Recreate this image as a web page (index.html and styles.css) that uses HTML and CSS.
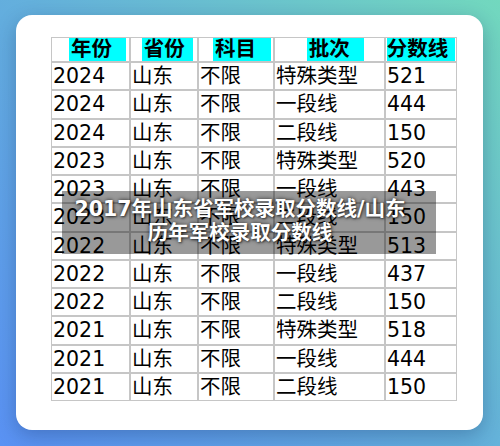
FILE: index.html
```html
<!DOCTYPE html>
<html lang="zh-CN">
<head>
<meta charset="utf-8">
<title>2017年山东省军校录取分数线</title>
<link rel="stylesheet" href="styles.css">
</head>
<body>
<div class="page">
  <div class="card">
    <table class="scores">
      <colgroup>
        <col class="c1"><col class="c2"><col class="c3"><col class="c4"><col class="c5">
      </colgroup>
      <thead>
        <tr>
          <th><span class="hl h1">年份</span></th>
          <th><span class="hl h2">省份</span></th>
          <th><span class="hl h3">科目</span></th>
          <th><span class="hl h4">批次</span></th>
          <th><span class="hl h5">分数线</span></th>
        </tr>
      </thead>
      <tbody>
        <tr><td>2024</td><td>山东</td><td>不限</td><td>特殊类型</td><td>521</td></tr>
        <tr><td>2024</td><td>山东</td><td>不限</td><td>一段线</td><td>444</td></tr>
        <tr><td>2024</td><td>山东</td><td>不限</td><td>二段线</td><td>150</td></tr>
        <tr><td>2023</td><td>山东</td><td>不限</td><td>特殊类型</td><td>520</td></tr>
        <tr><td>2023</td><td>山东</td><td>不限</td><td>一段线</td><td>443</td></tr>
        <tr><td>2023</td><td>山东</td><td>不限</td><td>二段线</td><td>150</td></tr>
        <tr><td>2022</td><td>山东</td><td>不限</td><td>特殊类型</td><td>513</td></tr>
        <tr><td>2022</td><td>山东</td><td>不限</td><td>一段线</td><td>437</td></tr>
        <tr><td>2022</td><td>山东</td><td>不限</td><td>二段线</td><td>150</td></tr>
        <tr><td>2021</td><td>山东</td><td>不限</td><td>特殊类型</td><td>518</td></tr>
        <tr><td>2021</td><td>山东</td><td>不限</td><td>一段线</td><td>444</td></tr>
        <tr><td>2021</td><td>山东</td><td>不限</td><td>二段线</td><td>150</td></tr>
      </tbody>
    </table>
  </div>
  <div class="caption">2017年山东省军校录取分数线/山东<br>历年军校录取分数线</div>
</div>
</body>
</html>
```

FILE: styles.css
```css
html, body {
  margin: 0;
  padding: 0;
}

body {
  width: 500px;
  height: 446px;
  overflow: hidden;
  background: linear-gradient(45deg, #5a92f4 0%, #64b0dc 50%, #72d8be 100%);
  font-family: "DejaVu Sans", "Noto Sans CJK SC", sans-serif;
}

.page {
  position: relative;
  box-sizing: border-box;
  width: 500px;
  height: 446px;
  padding: 15px 17px 16px 16px;
}

.card {
  box-sizing: border-box;
  height: 415px;
  background: #ffffff;
  border-radius: 16px;
  box-shadow: 0 6px 20px rgba(10, 30, 80, 0.28);
  padding: 22px 0 0 35px;
}

.scores {
  table-layout: fixed;
  width: 406px;
  border-collapse: separate;
  border-spacing: 0;
  font-size: 20.5px;
  color: #000;
}

.c1 { width: 79px; }
.c2 { width: 68px; }
.c3 { width: 76px; }
.c4 { width: 111px; }
.c5 { width: 72px; }

.scores th,
.scores td {
  box-sizing: border-box;
  border: 1px solid #c6c6c6;
  padding: 0;
  text-align: left;
  vertical-align: middle;
  white-space: nowrap;
  overflow: hidden;
}

.scores th {
  height: 25px;
  font-weight: bold;
  line-height: 23px;
}

.scores td {
  height: 28.25px;
  line-height: 26px;
  padding-left: 1px;
}

.hl {
  display: inline-block;
  box-sizing: border-box;
  height: 23px;
  line-height: 23px;
  padding-left: 2px;
  background: #00ffff;
  vertical-align: top;
}

.h1 { margin-left: 17px; width: 57px; }
.h2 { margin-left: 10.7px; width: 51.3px; }
.h3 { margin-left: 14px; width: 58px; }
.h4 { margin-left: 31.7px; width: 57.3px; }
.h5 { margin-left: 0.7px; width: 68.3px; padding-left: 0; }

.caption {
  position: absolute;
  left: 62px;
  top: 191px;
  box-sizing: border-box;
  width: 374px;
  height: 63px;
  padding: 6px 22px 9px 4px;
  background: rgba(0, 0, 0, 0.4);
  color: #ffffff;
  font-weight: bold;
  font-size: 20.5px;
  line-height: 24px;
  text-align: center;
  white-space: nowrap;
  text-shadow: 0 0 4px rgba(0, 0, 0, 0.75), 1px 1px 2px rgba(0, 0, 0, 0.5);
}
```
